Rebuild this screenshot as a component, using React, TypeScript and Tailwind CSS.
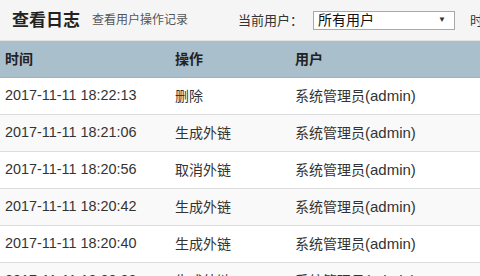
const FONT = "font-['Liberation_Sans','Noto_Sans_CJK_SC',sans-serif]";

interface LogRow {
  time: string;
  action: string;
  name: string;
  account: string;
}

const rows: LogRow[] = [
  { time: "2017-11-11 18:22:13", action: "删除", name: "系统管理员", account: "admin" },
  { time: "2017-11-11 18:21:06", action: "生成外链", name: "系统管理员", account: "admin" },
  { time: "2017-11-11 18:20:56", action: "取消外链", name: "系统管理员", account: "admin" },
  { time: "2017-11-11 18:20:42", action: "生成外链", name: "系统管理员", account: "admin" },
  { time: "2017-11-11 18:20:40", action: "生成外链", name: "系统管理员", account: "admin" },
  { time: "2017-11-11 18:20:38", action: "生成外链", name: "系统管理员", account: "admin" },
];

export default function App() {
  return (
    <div className={`${FONT} w-[480px] h-[276px] overflow-hidden bg-white text-[#333]`}>
      {/* ── Header */}
      <div className="h-[41px] bg-[#f5f5f5] border-b border-[#e3e3e3] flex items-center whitespace-nowrap overflow-hidden">
        <h1 className="ml-[12px] text-[17px] font-bold text-[#222] leading-none">查看日志</h1>
        <span className="ml-[12px] text-[12px] text-[#555] leading-none">查看用户操作记录</span>
        <span className="ml-[50px] text-[13px] text-[#333] leading-none">当前用户：</span>
        <div className="ml-[10px] w-[142px] h-[19px] shrink-0 bg-white border border-[#a9a9a9] flex items-center justify-between pl-[4px] pr-[8px]">
          <span className="text-[14px] leading-none text-[#111]">所有用户</span>
          <span className="text-[8px] leading-none text-[#333]">▼</span>
        </div>
        <span className="ml-[15px] text-[13px] leading-none">时间：</span>
      </div>

      {/* ── Table header */}
      <div className="grid grid-cols-[175px_120px_1fr] h-[37px] items-center bg-[#a9bfcc] border-b border-[#9fb3bf] text-[14px] font-bold text-[#222]">
        <div className="pl-[5px]">时间</div>
        <div>操作</div>
        <div>用户</div>
      </div>

      {/* ── Rows */}
      {rows.map((r, i) => (
        <div
          key={i}
          className={`grid grid-cols-[175px_120px_1fr] h-[37px] items-center border-b border-[#dddddd] whitespace-nowrap ${
            i % 2 === 1 ? "bg-[#f9f9f9]" : "bg-white"
          }`}
        >
          <div className="pl-[5px] text-[14.4px]">{r.time}</div>
          <div className="text-[14px]">{r.action}</div>
          <div className="text-[14px]">
            {r.name}
            <span className="text-[15px]">({r.account})</span>
          </div>
        </div>
      ))}
    </div>
  );
}
